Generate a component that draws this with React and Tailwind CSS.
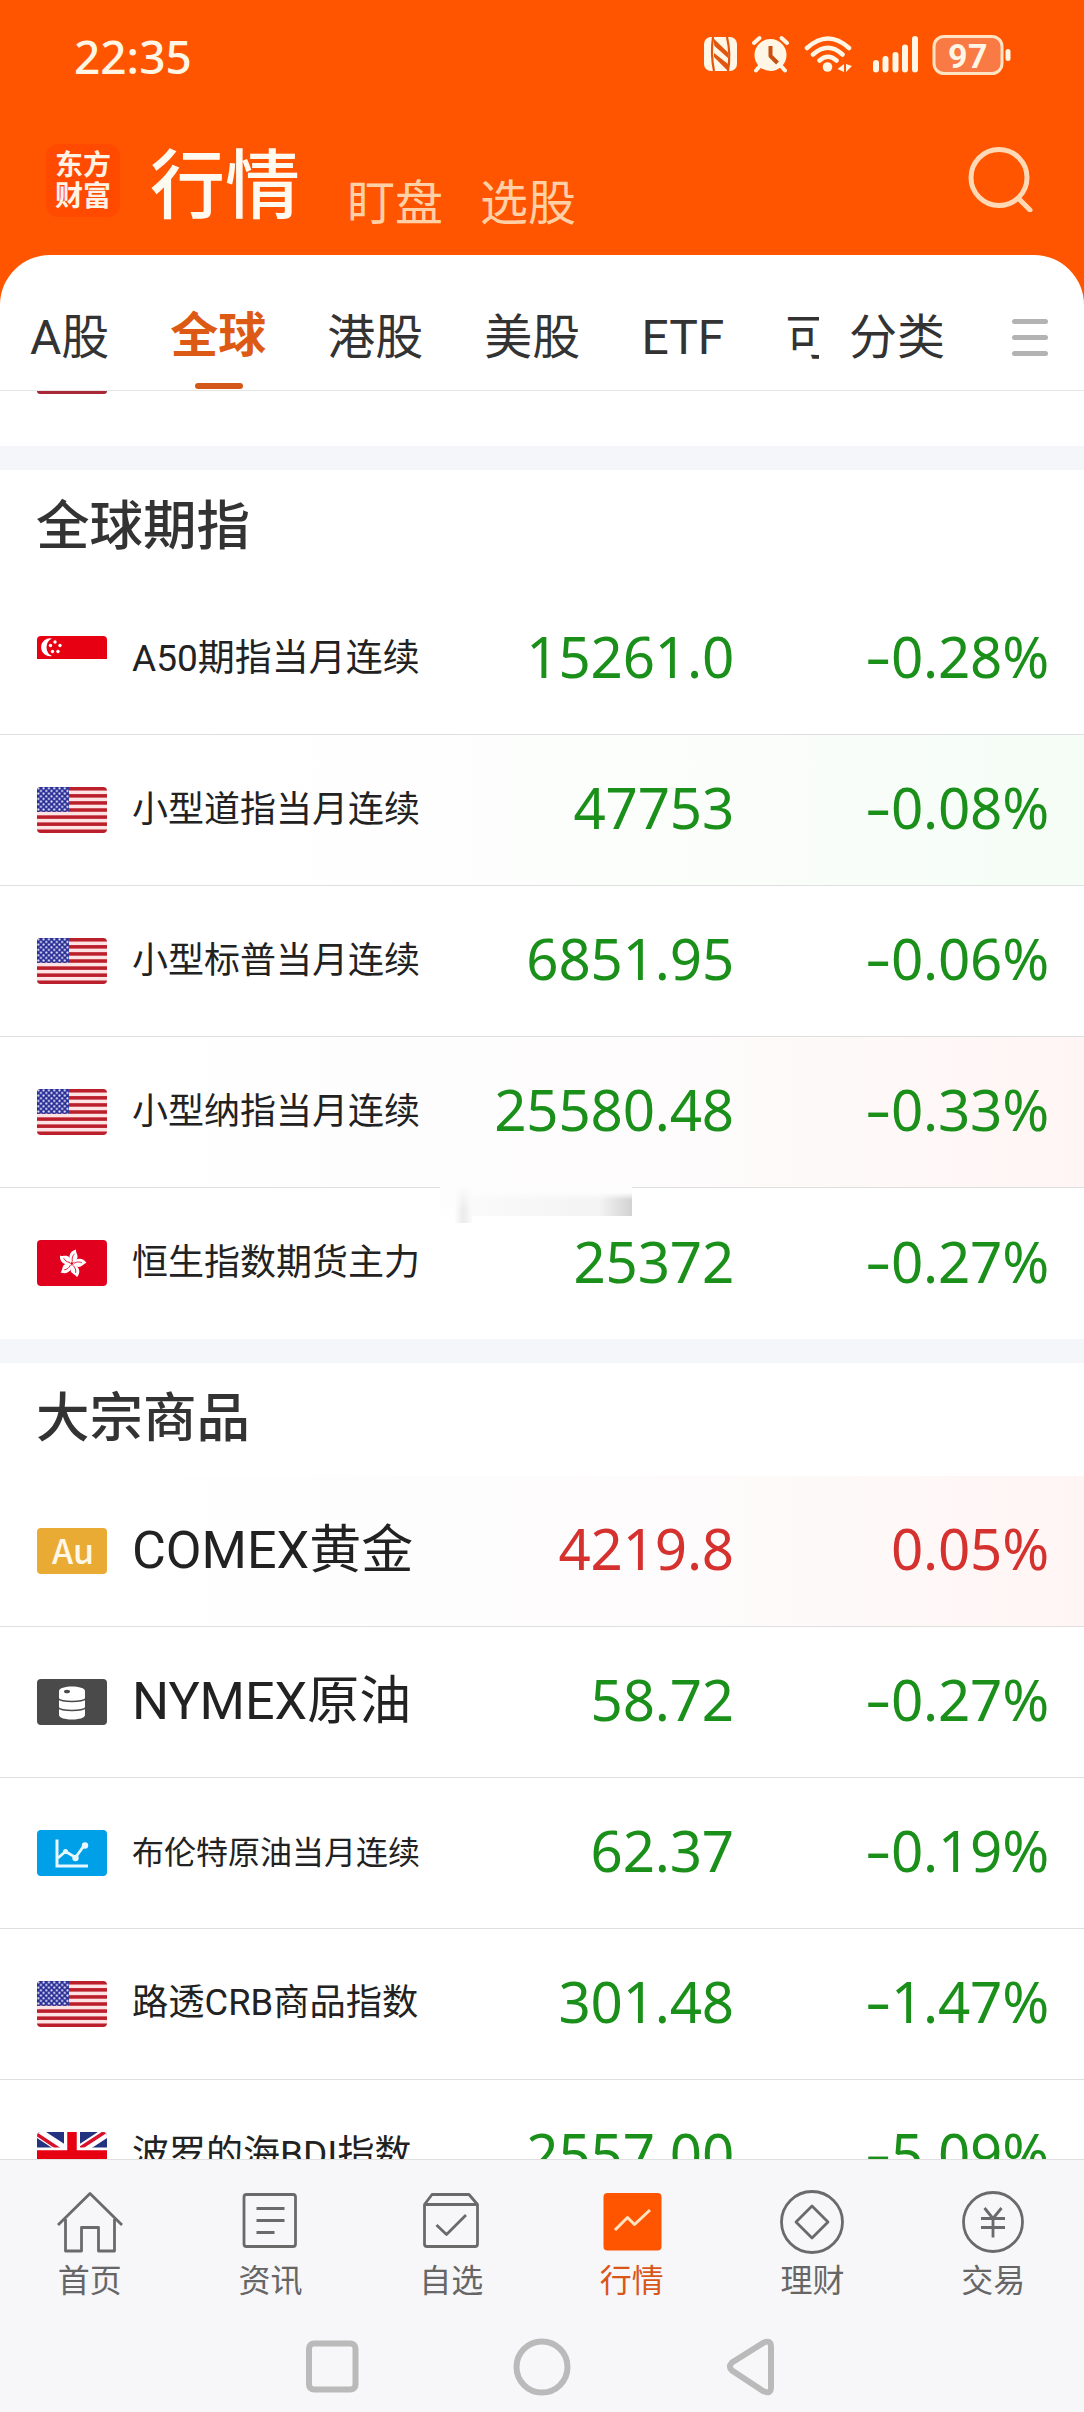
import React from 'react';

const globalFutures = [
    { flag: 'sg', name: 'A50期指当月连续', size: 'text-[37px]', price: '15261.0', change: '-0.28%' },
    { flag: 'us', name: '小型道指当月连续', size: 'text-[36px]', price: '47753', change: '-0.08%', flash: 'down' },
    { flag: 'us', name: '小型标普当月连续', size: 'text-[36px]', price: '6851.95', change: '-0.06%' },
    { flag: 'us', name: '小型纳指当月连续', size: 'text-[36px]', price: '25580.48', change: '-0.33%', flash: 'up' },
    { flag: 'hk', name: '恒生指数期货主力', size: 'text-[36px]', price: '25372', change: '-0.27%' },
];

const commodities = [
    { flag: 'au', name: 'COMEX黄金', size: 'text-[52px]', price: '4219.8', change: '0.05%', flash: 'up' },
    { flag: 'oil', name: 'NYMEX原油', size: 'text-[52px]', price: '58.72', change: '-0.27%' },
    { flag: 'chart', name: '布伦特原油当月连续', size: 'text-[32px]', price: '62.37', change: '-0.19%' },
    { flag: 'us', name: '路透CRB商品指数', size: 'text-[36.3px]', price: '301.48', change: '-1.47%' },
    { flag: 'gb', name: '波罗的海BDI指数', size: 'text-[37px]', price: '2557.00', change: '-5.09%' },
];

const flashClass = {
    up: 'bg-linear-to-r from-white from-10% via-[#fdfbfb] via-65% to-[#fff5f4]',
    down: 'bg-linear-to-r from-white from-10% via-[#fbfdfb] via-65% to-[#f5fdf6]',
};

const FlagArt = ({ type }) => {
    if (type === 'sg') {
        return (
            <>
                <rect width="70" height="46" fill="#fff" />
                <rect width="70" height="23" fill="#e60012" />
                <path d="M15 2.500a9 9 0 1 0 0 17.600a9.800 9.800 0 0 1 0-17.600z" fill="#fff" />
                {[[18, 6], [23, 9.500], [21, 15.500], [15.500, 15.500], [13.500, 9.500]].map(([x, y]) => (
                    <circle key={`${x}-${y}`} cx={x} cy={y} r="1.700" fill="#fff" />
                ))}
            </>
        );
    }
    if (type === 'us') {
        return (
            <>
                <defs>
                    <pattern id="stars" width="5.300" height="5.300" patternUnits="userSpaceOnUse">
                        <circle cx="1.300" cy="1.300" r="1.050" fill="#e8ecff" />
                        <circle cx="3.950" cy="3.950" r="1.050" fill="#e8ecff" />
                    </pattern>
                </defs>
                <rect width="70" height="46" fill="#fde3e3" />
                {[0, 1, 2, 3, 4, 5, 6].map((i) => (
                    <rect key={i} y={i * 7.080} width="70" height="3.540" fill="#bb1f2c" />
                ))}
                <rect width="32" height="24.800" fill="#2b2f95" />
                <rect width="32" height="24.800" fill="url(#stars)" />
            </>
        );
    }
    if (type === 'hk') {
        return (
            <>
                <rect width="70" height="46" fill="#e2001f" />
                {[12, 84, 156, 228, 300].map((deg) => (
                    <g key={deg} transform={`translate(35 23.500) rotate(${deg})`}>
                        <path d="M0 -1C-5 -4 -6 -11 1 -14.500C1 -11 6 -9 3.500 -4C2.800 -2.500 1.500 -1.500 0 -1z" fill="#fff" />
                        <path d="M0 -2C-1.500 -5 -1 -8 0.500 -10" stroke="#e2001f" strokeWidth="0.800" fill="none" />
                    </g>
                ))}
            </>
        );
    }
    if (type === 'gb') {
        return (
            <>
                <rect width="70" height="46" fill="#24337f" />
                <path d="M0 0L70 46M70 0L0 46" stroke="#fff" strokeWidth="10" />
                <path d="M0 2.500L31 23M68 0L35 21.500" stroke="#d8102a" strokeWidth="3.500" />
                <path d="M35 0V46" stroke="#fff" strokeWidth="16" />
                <path d="M0 23H70" stroke="#fff" strokeWidth="15" />
                <path d="M35 0V46M0 23H70" stroke="#e60012" strokeWidth="9.500" />
            </>
        );
    }
    if (type === 'oil') {
        return (
            <>
                <rect width="70" height="46" fill="#4a4a4a" />
                <path d="M22 12V36C22 42 48 42 48 36V12C48 6 22 6 22 12z" fill="#fff" />
                <path d="M21 19.500C25 23.500 45 23.500 49 19.500M21 28.500C25 32.500 45 32.500 49 28.500" stroke="#4a4a4a" strokeWidth="1.400" fill="none" />
                <ellipse cx="30" cy="12.500" rx="3" ry="1.800" fill="#4a4a4a" />
            </>
        );
    }
    if (type === 'chart') {
        return (
            <>
                <rect width="70" height="46" fill="#00a0e9" />
                <path d="M20 9.500V36H51" stroke="#e8f7fe" strokeWidth="3" fill="none" />
                <path d="M21 28L28.500 21.500L38.500 27.500L47.500 15" stroke="#e8f7fe" strokeWidth="2.800" fill="none" />
                <circle cx="28.500" cy="21.500" r="2.500" fill="#e8f7fe" />
                <circle cx="38.500" cy="28" r="3.200" fill="#e8f7fe" />
                <circle cx="48" cy="15.500" r="3.200" fill="#e8f7fe" />
            </>
        );
    }
    return null;
};

const Flag = ({ type }) => {
    if (type === 'au') {
        return (
            <div className="w-[70px] h-[46px] rounded-[4px] bg-[#e9ab33] text-[#fff8e8] flex items-center justify-center pb-0.5 pl-0.5 font-['Noto_Sans_CJK_SC'] font-medium text-[34px] leading-none">
                Au
            </div>
        );
    }
    return (
        <svg className="rounded-[4px] shrink-0" width="70" height="46" viewBox="0 0 70 46">
            <FlagArt type={type} />
        </svg>
    );
};

const Change = ({ value }) => (
    <span className="flex-1 text-right">
        {value.startsWith('-') && <span className="inline-block scale-x-[1.45] origin-right -translate-y-px">-</span>}
        {value.replace('-', '')}
    </span>
);

const QuoteRow = ({ item }) => (
    <div className={`flex items-center h-[151px] shrink-0 pl-[37px] pr-[35px] pb-px border-b border-[#dfdfdf] last:border-b-0 ${flashClass[item.flash] || ''}`}>
        <Flag type={item.flag} />
        <div className={`ml-[25px] w-[300px] whitespace-nowrap text-[#222] ${item.size}`}>{item.name}</div>
        <div className={`flex-1 flex pb-0.5 whitespace-nowrap font-['Noto_Sans'] text-[56.5px] tracking-[-0.2px] ${item.change.startsWith('-') ? 'text-[#1a901a]' : 'text-[#d5322f]'}`}>
            <span className="w-[302px] text-right">{item.price}</span>
            <Change value={item.change} />
        </div>
    </div>
);

const Section = ({ title, items, titleHeight }) => (
    <section className="border-t-[24px] border-[#f5f6f9]">
        <h2 className={`${titleHeight} pl-[36px] flex items-center text-[53.5px] font-medium text-[#333]`}>{title}</h2>
        {items.map((item) => <QuoteRow key={item.name} item={item} />)}
    </section>
);

const StatusBar = () => (
    <div className="h-[110px] pl-[74px] pr-[73px] flex items-center justify-between text-[#fff6e6]">
        <span className="text-[46px] leading-none font-medium font-['Noto_Sans'] pt-px">22:35</span>
        <svg width="307" height="40" viewBox="704 37 307 40" fill="none">
            <rect x="704" y="39" width="33" height="34" rx="7" fill="#fff6e6" />
            <path d="M713 39Q710.500 56 714 73M727 39Q731 56 728 73" stroke="#e0560f" strokeWidth="2.200" />
            <path d="M713 40L728 54.500V60L714.500 48zM714 55L728 66V73L714 59z" fill="#e0560f" />
            <circle cx="770.500" cy="57" r="16" fill="#fff6e6" />
            <path d="M754 45L759.500 40M787 45L781.500 40M756 72.500L760 68M785 72.500L781 68" stroke="#fff6e6" strokeWidth="4" strokeLinecap="round" />
            <path d="M770.500 48V58L777.500 65" stroke="#c8500f" strokeWidth="4" strokeLinejoin="round" />
            <path d="M807 50Q828 31 849 50M813 56.500Q828 43 842.500 56.500M819.500 62.500Q828 55 836.500 62.500" stroke="#fff6e6" strokeWidth="4.500" strokeLinecap="round" />
            <circle cx="827.500" cy="69" r="4.800" fill="#fff6e6" />
            <path d="M837.500 71L844 66V74zM852 68L846 66V74z" fill="#fff6e6" />
            <path d="M876 65V71.500M885.500 61V71.500M895.500 57V71.500M905 49.500V71.500M915 41V71.500" stroke="#fff6e6" strokeWidth="6" strokeLinecap="round" />
            <rect x="934" y="38.500" width="68" height="37" rx="10" fill="#f97a45" stroke="#ffe3c2" strokeWidth="3" />
            <rect x="1005.500" y="51" width="5" height="12" rx="2.500" fill="#fff6e6" />
            <text x="968" y="69.500" textAnchor="middle" fontFamily="Roboto" fontWeight="700" fontSize="34" letterSpacing="0.500" fill="#fff6e6">97</text>
        </svg>
    </div>
);

const TopNav = () => (
    <div className="h-[145px] pl-[46px] pr-[50px] flex items-start">
        <div className="mt-[34px] w-[74px] h-[73px] rounded-[12px] bg-[#ff4a00] text-[#fff3e6] font-bold text-[28px] leading-[31px] flex flex-col items-center justify-center">
            <span>东方</span>
            <span>财富</span>
        </div>
        <span className="ml-[30px] mt-[39px] text-[75px] leading-[75px] font-medium text-[#fffaf0]">行情</span>
        <span className="ml-[47px] mt-[70px] text-[48px] leading-[48px] text-[#ffd0a6]">盯盘</span>
        <span className="ml-[37px] mt-[70px] text-[48px] leading-[48px] text-[#ffd0a6]">选股</span>
        <svg className="ml-auto mt-[35px]" width="67" height="67" viewBox="0 0 67 67" fill="none" stroke="#ffd9b5" strokeWidth="5" strokeLinecap="round">
            <circle cx="32" cy="32.500" r="28" />
            <path d="M52 54L63 65" />
        </svg>
    </div>
);

const Tabs = () => (
    <div className="h-[136px] shrink-0 rounded-t-[50px] bg-white border-b border-[#e6e6e6] flex items-stretch text-[48px] text-[#333]">
        <div className="w-[819px] overflow-hidden flex gap-[61px] pl-[30px] pt-[30px] whitespace-nowrap leading-[106px]">
            <span>A股</span>
            <span className="relative font-bold text-[#dd5a14] -top-0.5">
                全球
                <i className="absolute left-[25px] -bottom-px w-[48px] h-[6px] rounded-full bg-[#d4581a]" />
            </span>
            <span>港股</span>
            <span>美股</span>
            <span>ETF</span>
            <span>可</span>
        </div>
        <span className="ml-[30px] pt-[30px] leading-[106px]">分类</span>
        <div className="ml-auto mr-[36px] mt-[64px] flex flex-col gap-[11px]">
            <i className="block w-[36px] h-[5px] rounded-full bg-[#b3b3b3]" />
            <i className="block w-[36px] h-[5px] rounded-full bg-[#b3b3b3]" />
            <i className="block w-[36px] h-[5px] rounded-full bg-[#b3b3b3]" />
        </div>
    </div>
);

const navItems = [
    { label: '首页', icon: <path d="M3 35L35 3.500L67 35M10.500 29V61H26.500V37.500H43.500V61H59.500V29" /> },
    { label: '资讯', icon: <><rect x="9" y="4.500" width="51.500" height="52" rx="2.500" /><path d="M21.500 18.500H49.500M21.500 30.500H49.500M21.500 42.500H39.500" /></> },
    { label: '自选', icon: <path d="M8.500 14.500L16 4.500H53L61.500 14.500V54Q61.500 56.500 59 56.500H11Q8.500 56.500 8.500 54zM8.500 14.500H61.500M20.500 35L30.500 44.500L50 25" /> },
    { label: '行情', active: true, icon: <><rect x="6.500" y="3" width="58" height="57.500" rx="4" fill="#ff5500" stroke="none" /><path d="M18 40L30.500 27.500L37.500 34.500L53 20" stroke="#ffe3c2" strokeWidth="3" /></> },
    { label: '理财', icon: <><circle cx="35" cy="32" r="30.500" /><path d="M35 16L51 32L35 48L19 32z" /></> },
    { label: '交易', icon: <><circle cx="35" cy="32" r="29.500" /><path d="M26.500 18L35 28.500L43.500 18M35 28.500V47.500M23 28.500H47M23 37.500H47" /></> },
];

const BottomNav = () => (
    <nav className="h-[253px] shrink-0 bg-[#f7f7f9] border-t border-[#e0e0e0]">
        <div className="grid grid-cols-6 pt-[30px]">
            {navItems.map((item) => (
                <div key={item.label} className={`flex flex-col items-center text-[32px] leading-[40px] pr-px ${item.active ? 'text-[#d9561a]' : 'text-[#666]'}`}>
                    <svg width="70" height="66" viewBox="0 0 70 66" fill="none" stroke="#6a6a6a" strokeWidth="2.800" strokeLinejoin="round">
                        {item.icon}
                    </svg>
                    <span className="mt-[5px]">{item.label}</span>
                </div>
            ))}
        </div>
        <svg className="ml-[306px] mt-[36px]" width="470" height="60" viewBox="0 0 470 60" fill="none" stroke="#bababa" strokeWidth="6" strokeLinejoin="round">
            <rect x="3" y="6.500" width="46.500" height="46" rx="5" />
            <circle cx="236" cy="30" r="25.500" />
            <path d="M426 25.500Q422 29.500 426 33.500L457 54Q465 58 465 50V10Q465 2 457 6z" />
        </svg>
    </nav>
);

const App = () => (
    <div className="w-[1084px] h-[2412px] overflow-hidden flex flex-col bg-white font-[Roboto,'Noto_Sans_CJK_SC',sans-serif]">
        <header className="bg-[#ff5500] shrink-0">
            <StatusBar />
            <TopNav />
            <Tabs />
        </header>
        <main className="relative flex-1 min-h-0 overflow-hidden">
            <div className="h-[55px] pl-[37px]">
                <div className="w-[70px] h-[3px] rounded-b-[4px] bg-[#a8283a]" />
            </div>
            <Section title="全球期指" items={globalFutures} titleHeight="h-[114px]" />
            <Section title="大宗商品" items={commodities} titleHeight="h-[113px]" />
            {/* faded strip over the row divider */}
            <div className="absolute left-[440px] top-[796px] w-[192px] h-[36px] bg-linear-to-b from-[#fdfcfc] to-white pl-[14px] flex">
                <div className="w-[18px] h-[36px] bg-linear-to-r from-white via-[#ebebeb] to-[#fafafa] mask-t-from-40%" />
                <div className="flex-1 mt-[6px] h-[23px] bg-linear-to-r from-[#fafafa] via-[#f3f3f3] via-80% to-[#d2d2d2] mask-t-from-70%" />
            </div>
        </main>
        <BottomNav />
    </div>
);

export default App;
